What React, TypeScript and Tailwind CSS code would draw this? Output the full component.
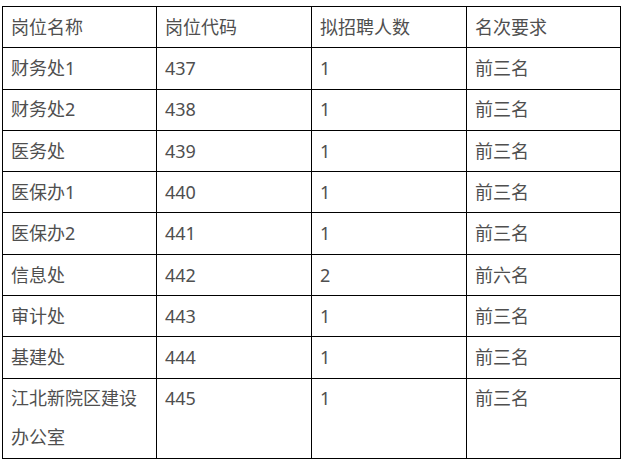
const rows: [string, string, string, string][] = [
  ['财务处1', '437', '1', '前三名'],
  ['财务处2', '438', '1', '前三名'],
  ['医务处', '439', '1', '前三名'],
  ['医保办1', '440', '1', '前三名'],
  ['医保办2', '441', '1', '前三名'],
  ['信息处', '442', '2', '前六名'],
  ['审计处', '443', '1', '前三名'],
  ['基建处', '444', '1', '前三名'],
  ['江北新院区建设办公室', '445', '1', '前三名'],
];

const headers = ['岗位名称', '岗位代码', '拟招聘人数', '名次要求'];

const cell =
  'border border-black pl-[8px] pr-[2px] py-[0.8px] align-top text-left font-normal';

export default function App() {
  return (
    <div className="min-h-[463px] w-[626px] bg-white pl-[2px] pt-[6px]">
      <table
        className="w-[618px] table-fixed border-collapse text-[18px] leading-[38.7px] text-[#4f4f4f]"
        style={{ fontFamily: '"Noto Sans", "Noto Sans CJK SC", sans-serif' }}
      >
        <colgroup>
          <col className="w-[154px]" />
          <col className="w-[155px]" />
          <col className="w-[155px]" />
          <col className="w-[154px]" />
        </colgroup>
        <thead>
          <tr>
            {headers.map((h) => (
              <th key={h} className={cell}>
                {h}
              </th>
            ))}
          </tr>
        </thead>
        <tbody>
          {rows.map((r) => (
            <tr key={r[1]}>
              {r.map((v, i) => (
                <td key={i} className={cell}>
                  {v}
                </td>
              ))}
            </tr>
          ))}
        </tbody>
      </table>
    </div>
  );
}
